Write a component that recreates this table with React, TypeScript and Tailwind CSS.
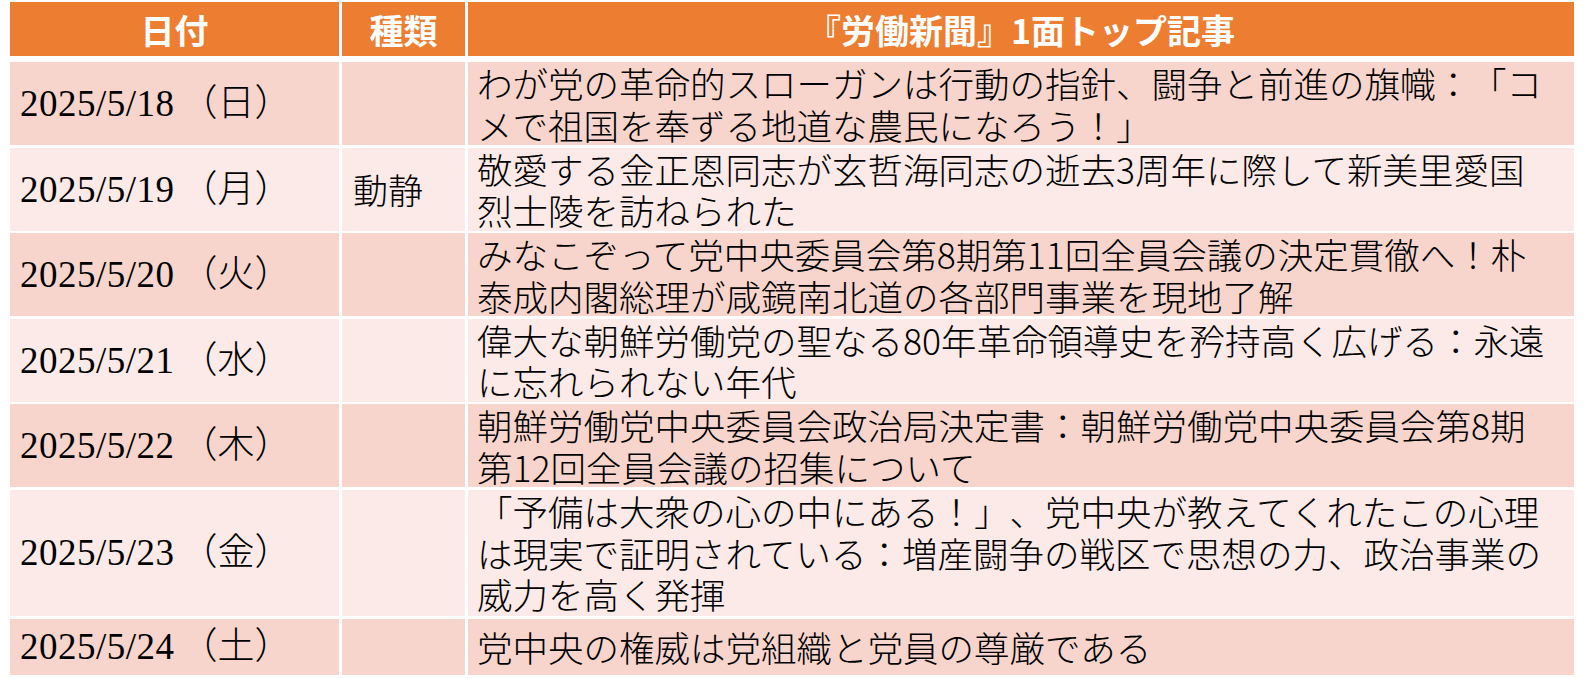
import React from "react";

type Row = { date: string; day: string; kind: string; lines: string[] };

const rows: Row[] = [
  {
    date: "2025/5/18",
    day: "（日）",
    kind: "",
    lines: [
      "わが党の革命的スローガンは行動の指針、闘争と前進の旗幟：「コ",
      "メで祖国を奉ずる地道な農民になろう！」",
    ],
  },
  {
    date: "2025/5/19",
    day: "（月）",
    kind: "動静",
    lines: [
      "敬愛する金正恩同志が玄哲海同志の逝去3周年に際して新美里愛国",
      "烈士陵を訪ねられた",
    ],
  },
  {
    date: "2025/5/20",
    day: "（火）",
    kind: "",
    lines: [
      "みなこぞって党中央委員会第8期第11回全員会議の決定貫徹へ！朴",
      "泰成内閣総理が咸鏡南北道の各部門事業を現地了解",
    ],
  },
  {
    date: "2025/5/21",
    day: "（水）",
    kind: "",
    lines: [
      "偉大な朝鮮労働党の聖なる80年革命領導史を矜持高く広げる：永遠",
      "に忘れられない年代",
    ],
  },
  {
    date: "2025/5/22",
    day: "（木）",
    kind: "",
    lines: [
      "朝鮮労働党中央委員会政治局決定書：朝鮮労働党中央委員会第8期",
      "第12回全員会議の招集について",
    ],
  },
  {
    date: "2025/5/23",
    day: "（金）",
    kind: "",
    lines: [
      "「予備は大衆の心の中にある！」、党中央が教えてくれたこの心理",
      "は現実で証明されている：増産闘争の戦区で思想の力、政治事業の",
      "威力を高く発揮",
    ],
  },
  {
    date: "2025/5/24",
    day: "（土）",
    kind: "",
    lines: ["党中央の権威は党組織と党員の尊厳である"],
  },
];

const heights = ["", "h-[56px]", "h-[82.5px]", "h-[126px]"];

export default function App() {
  return (
    <div className="w-[1585px] h-[679px] bg-white pt-[2px] pl-[10px] font-['Noto_Sans_CJK_JP',sans-serif] text-black [text-spacing-trim:space-all]">
      <div className="flex flex-col gap-[3px]">
        <div className="grid grid-cols-[329px_123px_1106px] gap-x-[3px] h-[54px] mb-[3px]">
          <div className="bg-[#ed7d31] text-white font-bold text-[34px] flex items-center justify-center">
            日付
          </div>
          <div className="bg-[#ed7d31] text-white font-bold text-[34px] flex items-center justify-center">
            種類
          </div>
          <div className="bg-[#ed7d31] text-white font-bold text-[34px] flex items-center justify-center">
            『労働新聞』1面トップ記事
          </div>
        </div>
        {rows.map((r, i) => {
          const bg = i % 2 === 0 ? "bg-[#f7d5cc]" : "bg-[#fbeae7]";
          return (
            <div
              key={r.date}
              className={`grid grid-cols-[329px_123px_1106px] gap-x-[3px] ${heights[r.lines.length]}`}
            >
              <div className={`${bg} flex items-center pl-[10px]`}>
                <span className="font-['Liberation_Serif','Noto_Sans_CJK_JP',serif] text-[37px] leading-none whitespace-nowrap">
                  <span className="tracking-[0.5px]">{r.date}</span>
                  <span className="font-light ml-[6px]">{r.day}</span>
                </span>
              </div>
              <div className={`${bg} flex items-center pl-[11px] text-[35px] font-light`}>
                {r.kind}
              </div>
              <div
                className={`${bg} flex flex-col justify-center pl-[9px] text-[35.5px] leading-[41.5px] font-light`}
              >
                {r.lines.map((l, j) => (
                  <div key={j} className="whitespace-nowrap">
                    {l}
                  </div>
                ))}
              </div>
            </div>
          );
        })}
      </div>
    </div>
  );
}
